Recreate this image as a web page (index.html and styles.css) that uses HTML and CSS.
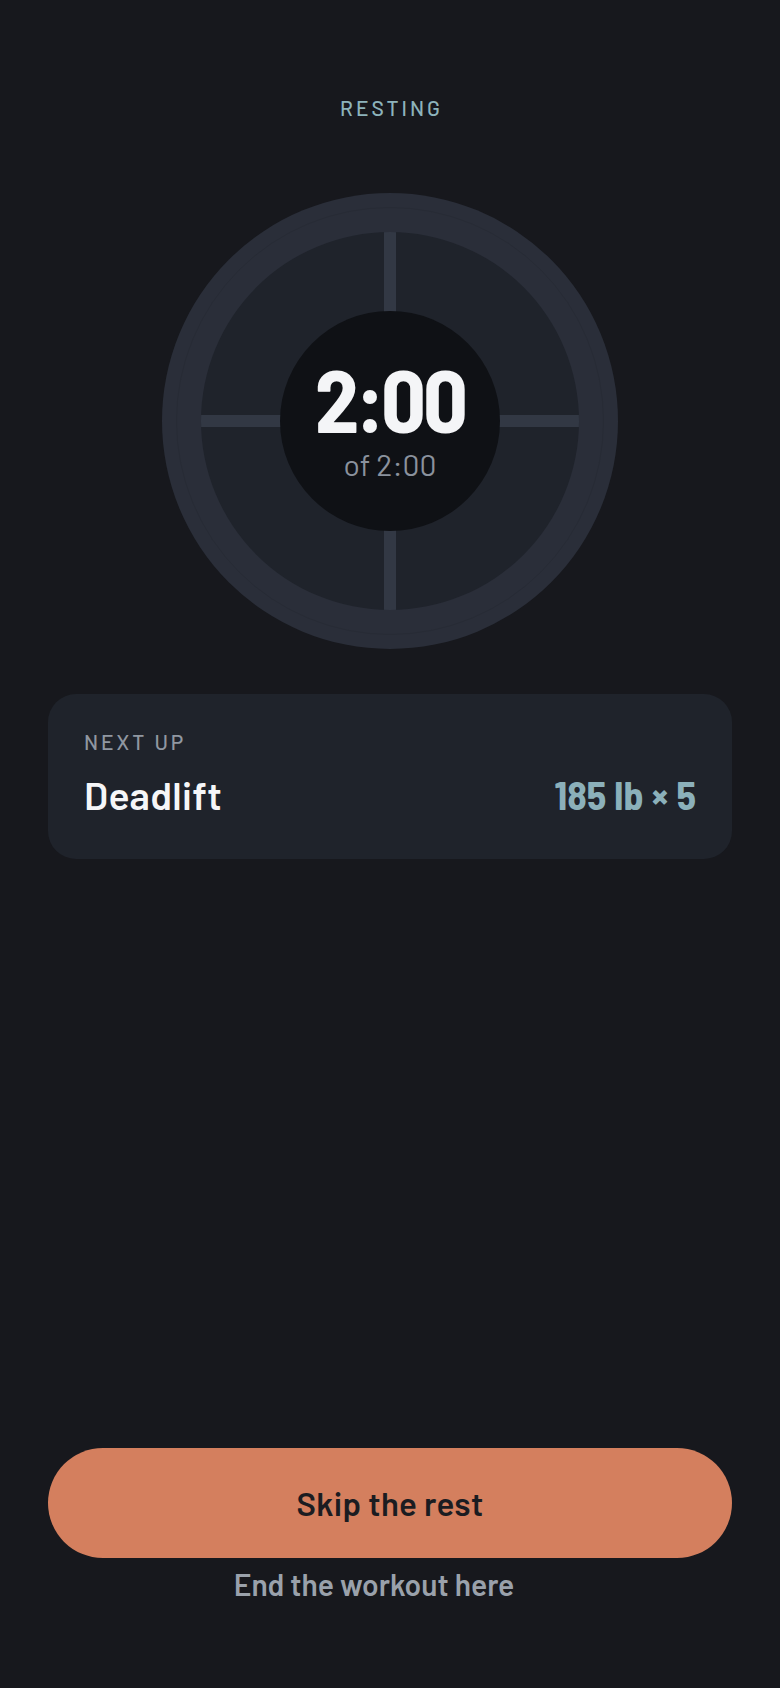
FILE: index.html
```html
<!DOCTYPE html>
<html lang="en">
<head>
    <meta charset="UTF-8">
    <meta name="viewport" content="width=device-width, initial-scale=1.0">
    <title>Rest Timer</title>
    <link rel="stylesheet" href="styles.css">
</head>
<body>
    <main class="screen">
        <p class="status">RESTING</p>

        <div class="ring">
            <div class="ring-track"></div>
            <div class="ring-face">
                <span class="tick tick-v"></span>
                <span class="tick tick-h"></span>
            </div>
            <div class="ring-center">
                <span class="time-left">2:00</span>
                <span class="time-total">of 2:00</span>
            </div>
        </div>

        <section class="next-card">
            <p class="next-label">NEXT UP</p>
            <div class="next-row">
                <span class="next-name">Deadlift</span>
                <span class="next-load">185 lb × 5</span>
            </div>
        </section>

        <div class="actions">
            <button class="skip-btn">Skip the rest</button>
            <button class="end-link">End the workout here</button>
        </div>
    </main>
</body>
</html>
```
FILE: styles.css
```css
* {
    margin: 0;
    padding: 0;
    box-sizing: border-box;
}

body {
    background: #17181d;
    font-family: "Barlow", "Roboto", sans-serif;
    color: #f3f4f6;
}

.screen {
    display: flex;
    flex-direction: column;
    align-items: center;
    min-height: 1688px;
    padding: 95px 48px 86px;
}

.status {
    font-size: 21px;
    font-weight: 500;
    letter-spacing: 3px;
    margin-right: -3px;
    color: #8db3bb;
}

/* timer dial */
.ring {
    position: relative;
    width: 456px;
    height: 456px;
    margin-top: 73px;
    border-radius: 50%;
    background: #2a2e39;
    display: flex;
    align-items: center;
    justify-content: center;
}

.ring-track {
    position: absolute;
    inset: 14px;
    border-radius: 50%;
    border: 1px solid #272b35;
}

.ring-face {
    position: absolute;
    inset: 39px;
    border-radius: 50%;
    background: #1f232b;
    overflow: hidden;
}

.tick {
    position: absolute;
    background: #323844;
}

.tick-v {
    left: 183px;
    top: 0;
    width: 12px;
    height: 100%;
}

.tick-h {
    top: 183px;
    left: 0;
    height: 12px;
    width: 100%;
}

.ring-center {
    position: relative;
    width: 220px;
    height: 220px;
    border-radius: 50%;
    background: #0f1115;
    display: flex;
    flex-direction: column;
    align-items: center;
    justify-content: center;
    padding-bottom: 9px;
}

.time-left {
    font-family: "Barlow Semi Condensed", "Barlow", sans-serif;
    font-size: 88px;
    font-weight: 700;
    line-height: 1;
    letter-spacing: -3px;
    color: #f4f5f7;
}

.time-total {
    font-size: 30px;
    font-weight: 400;
    line-height: 1;
    margin-top: 7px;
    color: #8a929d;
}

/* next exercise */
.next-card {
    width: 100%;
    margin-top: 45px;
    padding: 35px 36px 41px;
    border-radius: 28px;
    background: #1f232b;
}

.next-label {
    font-size: 21px;
    font-weight: 500;
    letter-spacing: 3px;
    color: #9097a1;
}

.next-row {
    display: flex;
    justify-content: space-between;
    align-items: baseline;
    margin-top: 16px;
}

.next-name {
    font-size: 39px;
    font-weight: 600;
    letter-spacing: 0.3px;
    color: #f5f6f8;
}

.next-load {
    font-family: "Barlow Semi Condensed", "Barlow", sans-serif;
    font-size: 40px;
    font-weight: 700;
    color: #8bb0ba;
}

/* bottom actions */
.actions {
    width: 100%;
    margin-top: auto;
    display: flex;
    flex-direction: column;
    align-items: center;
    gap: 8px;
}

.skip-btn {
    width: 100%;
    height: 110px;
    border: none;
    border-radius: 55px;
    background: #d47f5e;
    font-family: inherit;
    font-size: 33px;
    font-weight: 600;
    letter-spacing: 0.3px;
    color: #1b1c21;
}

.end-link {
    border: none;
    background: none;
    margin-right: 32px;
    font-family: inherit;
    font-size: 30px;
    font-weight: 600;
    line-height: 1.2;
    color: #9aa1ab;
}
```
